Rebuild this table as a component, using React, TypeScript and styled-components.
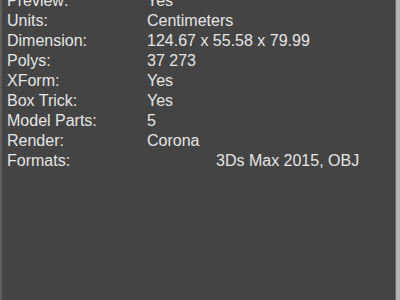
import styled, { createGlobalStyle } from "styled-components";

const GlobalStyle = createGlobalStyle`
  html, body {
    margin: 0;
    padding: 0;
    background: #444444;
  }
`;

type Spec = { label: string; value: string; indent?: number };

const specs: Spec[] = [
  { label: "Preview:", value: "Yes" },
  { label: "Units:", value: "Centimeters" },
  { label: "Dimension:", value: "124.67 x 55.58 x 79.99" },
  { label: "Polys:", value: "37 273" },
  { label: "XForm:", value: "Yes" },
  { label: "Box Trick:", value: "Yes" },
  { label: "Model Parts:", value: "5" },
  { label: "Render:", value: "Corona" },
  { label: "Formats:", value: "3Ds Max 2015, OBJ", indent: 69 },
];

const App = () => {
  return (
    <>
      <GlobalStyle />
      <Panel>
        <SpecList>
          {specs.map((s) => (
            <Row key={s.label}>
              <Label>{s.label}</Label>
              <Value $indent={s.indent ?? 0}>{s.value}</Value>
            </Row>
          ))}
        </SpecList>
      </Panel>
    </>
  );
};

export default App;

const Panel = styled.div`
  box-sizing: border-box;
  width: 400px;
  height: 300px;
  overflow: hidden;
  background-color: #444444;
  border-left: 2px solid #5e5e5e;
  border-right: 4px solid #b4b4b4;
  box-shadow: inset -1px 0 0 #666666;
`;

const SpecList = styled.div`
  display: flex;
  flex-direction: column;
  margin-top: -9px;
  padding-left: 5px;
`;

const Row = styled.div`
  display: grid;
  grid-template-columns: 140px 1fr;
  height: 20px;
  line-height: 20px;
  font-family: "Liberation Sans", Arial, sans-serif;
  font-size: 16px;
  color: #e4e4e4;
  white-space: nowrap;
`;

const Label = styled.span``;

const Value = styled.span<{ $indent: number }>`
  padding-left: ${(p) => p.$indent}px;
`;
